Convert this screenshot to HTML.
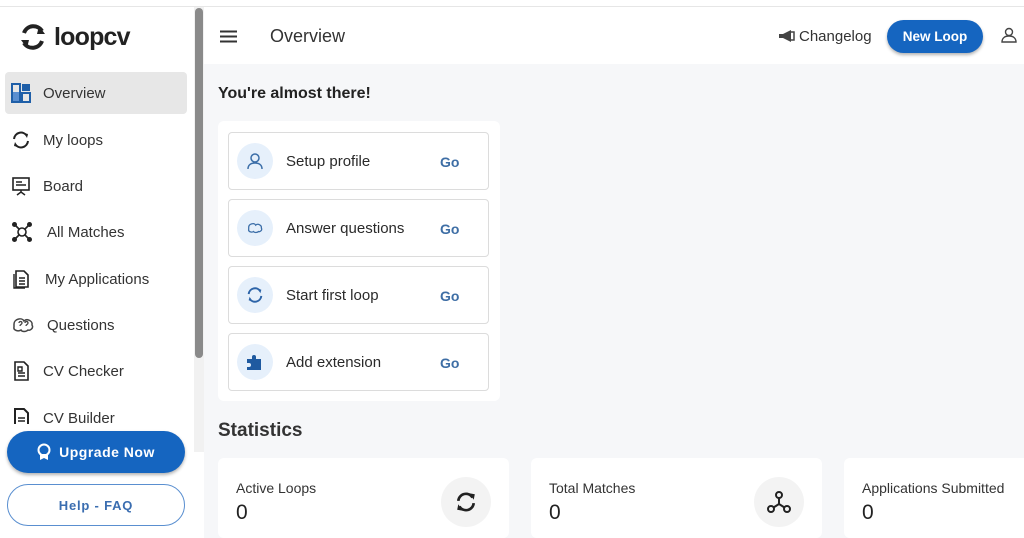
<!DOCTYPE html>
<html><head><meta charset="utf-8"><style>
*{box-sizing:border-box;margin:0;padding:0}
body{width:1024px;height:538px;overflow:hidden;background:#fff;font-family:"Liberation Sans",sans-serif;color:#222;position:relative}
.topline{position:absolute;left:0;top:6px;width:1024px;height:1px;background:#e6e6e6}
.side{position:absolute;left:0;top:7px;width:194px;height:531px;background:#fff}
.track{position:absolute;left:194px;top:7px;width:10px;height:445px;background:#f1f1f1}
.thumb{position:absolute;left:195px;top:8px;width:8px;height:350px;background:#8a8a8a;border-radius:4px}
.logo{position:absolute;left:18px;top:22px;display:flex;align-items:center}
.logo span{font-size:25px;font-weight:bold;color:#222;margin-left:6px;letter-spacing:-0.8px}
.nav{position:absolute;left:5px;width:182px;height:42px;display:flex;align-items:center;font-size:15px;color:#333}
.nav svg{position:absolute;left:6px}
.nav .t{position:absolute;left:38px}
.nav.act{background:#e7e7e7;border-radius:4px}
.up{position:absolute;left:7px;top:431px;width:178px;height:42px;background:#1565c0;border-radius:21px;color:#fff;font-weight:bold;font-size:14px;display:flex;align-items:center;justify-content:center;box-shadow:0 2px 3px rgba(0,0,0,.3);letter-spacing:.5px}
.help{position:absolute;left:7px;top:484px;width:178px;height:42px;border:1px solid #5a8fd0;border-radius:21px;color:#3a6db0;font-weight:bold;font-size:13px;display:flex;align-items:center;justify-content:center;letter-spacing:.8px}
.main{position:absolute;left:204px;top:64px;width:820px;height:474px;background:#f6f7f9}
.hdr{position:absolute;left:204px;top:7px;width:820px;height:57px;background:#fff}
.card{position:absolute;background:#fff;border-radius:6px}
.task{position:absolute;left:228px;width:261px;height:58px;border:1px solid #dcdcdc;border-radius:4px;background:#fff}
.task .ic{position:absolute;left:8px;top:10px;width:36px;height:36px;border-radius:50%;background:#e6f0fb;display:flex;align-items:center;justify-content:center}
.task .l{position:absolute;left:57px;top:20px;font-size:15px;color:#2a2a2a}
.task .g{position:absolute;left:211px;top:21px;font-size:14px;color:#3e6ea5;font-weight:bold}
.stat{position:absolute;top:458px;height:80px;background:#fff;border-radius:6px}
.stat .l{position:absolute;left:18px;top:22px;font-size:14px;color:#333}
.stat .n{position:absolute;left:18px;top:43px;font-size:21px;color:#222}
.stat .c{position:absolute;top:19px;width:50px;height:50px;border-radius:50%;background:#f3f3f3;display:flex;align-items:center;justify-content:center}
</style></head><body>
<div class="topline"></div>
<div class="side"></div>
<div class="main"></div>
<div class="hdr"></div>
<div class="track"></div><div class="thumb"></div>

<div class="logo">
<svg width="30" height="30" viewBox="0 0 30 30"><path d="M6 11 A10 10 0 0 1 24 9" fill="none" stroke="#222" stroke-width="4"/><path d="M21 4 L27 12 L19 12Z" fill="#222"/><path d="M24 19 A10 10 0 0 1 6 21" fill="none" stroke="#222" stroke-width="4"/><path d="M9 26 L3 18 L11 18Z" fill="#222"/></svg>
<span>loopcv</span></div>

<div class="nav act" style="top:72px"><svg width="20" height="20" viewBox="0 0 20 20"><rect x="1" y="1" width="8" height="18" fill="none" stroke="#1f5fa8" stroke-width="2"/><rect x="11" y="1" width="8" height="7" fill="#1f5fa8"/><rect x="11" y="10" width="8" height="9" fill="none" stroke="#1f5fa8" stroke-width="2"/><rect x="2" y="9" width="6" height="9" fill="#5b8fd0"/></svg><span class="t">Overview</span></div>
<div class="nav" style="top:119px"><svg width="20" height="20" viewBox="0 0 20 20"><path d="M3 9A7 7 0 0 1 16 6M17 11A7 7 0 0 1 4 14" fill="none" stroke="#222" stroke-width="2"/><path d="M13 3l4 1-1 4z M7 17l-4-1 1-4z" fill="#222"/></svg><span class="t">My loops</span></div>
<div class="nav" style="top:165px"><svg width="20" height="20" viewBox="0 0 20 20"><rect x="2" y="2" width="16" height="12" fill="none" stroke="#222" stroke-width="1.6"/><path d="M5 6h6M5 9h10M10 14v3M6 19l4-3 4 3" stroke="#222" stroke-width="1.5" fill="none"/></svg><span class="t">Board</span></div>
<div class="nav" style="top:211px"><svg width="22" height="22" viewBox="0 0 22 22"><circle cx="11" cy="11" r="4" fill="none" stroke="#222" stroke-width="1.6"/><path d="M4 4L8 8M18 4L14 8M4 18L8 14M18 18L14 14" stroke="#222" stroke-width="1.6"/><circle cx="3.5" cy="3.5" r="2.5" fill="#222"/><circle cx="18.5" cy="3.5" r="2.5" fill="#222"/><circle cx="3.5" cy="18.5" r="2.5" fill="#222"/><circle cx="18.5" cy="18.5" r="2.5" fill="#222"/></svg><span class="t" style="left:42px">All Matches</span></div>
<div class="nav" style="top:258px"><svg width="20" height="20" viewBox="0 0 20 20"><path d="M5 2h8l4 4v12H5z" fill="none" stroke="#222" stroke-width="1.6"/><path d="M3 5v14h11" fill="none" stroke="#222" stroke-width="1.4"/><path d="M8 9h6M8 12h6M8 15h6" stroke="#222" stroke-width="1.4"/></svg><span class="t" style="left:40px">My Applications</span></div>
<div class="nav" style="top:304px"><svg width="24" height="20" viewBox="0 0 24 20"><path d="M3 9c0-5 8-7 10-3 3-3 9 0 8 4 2 3-2 6-4 5-2 2-6 2-7 0-3 2-8 0-7-3z" fill="none" stroke="#444" stroke-width="1.5"/><path d="M8 8c0-2 3-2 3 0s-2 1-2 3M14 8c0-2 3-2 3 0s-2 1-2 3" fill="none" stroke="#444" stroke-width="1.3"/></svg><span class="t" style="left:42px">Questions</span></div>
<div class="nav" style="top:350px"><svg width="20" height="20" viewBox="0 0 20 20"><path d="M4 1h9l4 4v14H4z" fill="none" stroke="#222" stroke-width="1.6"/><path d="M7 6h4v4H7zM7 12h7M7 15h7" stroke="#222" stroke-width="1.4" fill="none"/></svg><span class="t">CV Checker</span></div>
<div style="position:absolute;left:0;top:408px;width:194px;height:16px;overflow:hidden"><div class="nav" style="top:-11px;left:5px"><svg width="20" height="20" viewBox="0 0 20 20"><path d="M4 1h9l4 4v14H4z" fill="none" stroke="#222" stroke-width="2"/><path d="M7 10h7M7 13h7" stroke="#222" stroke-width="1.6"/></svg><span class="t">CV Builder</span></div></div>

<div class="up"><svg width="14" height="18" viewBox="0 0 14 18" style="margin-right:8px"><circle cx="7" cy="7" r="5.5" fill="none" stroke="#fff" stroke-width="2"/><path d="M3 11v6l4-2 4 2v-6" fill="#fff"/></svg>Upgrade Now</div>
<div class="help">Help - FAQ</div>

<svg style="position:absolute;left:220px;top:30px" width="18" height="13" viewBox="0 0 18 13"><path d="M0 1.5h17M0 6.5h17M0 11.5h17" stroke="#333" stroke-width="2"/></svg>
<div style="position:absolute;left:270px;top:26px;font-size:18px;color:#333">Overview</div>
<svg style="position:absolute;left:778px;top:29px" width="18" height="14" viewBox="0 0 18 14"><path d="M1 5h4l8-4v12l-8-4H1z" fill="#444"/><path d="M13 3h3v8h-3" fill="none" stroke="#444" stroke-width="1.5"/></svg>
<div style="position:absolute;left:799px;top:28px;font-size:15px;color:#333">Changelog</div>
<div style="position:absolute;left:887px;top:20px;width:96px;height:33px;border-radius:17px;background:#1565c0;color:#fff;font-weight:bold;font-size:13.5px;display:flex;align-items:center;justify-content:center;box-shadow:0 2px 3px rgba(0,0,0,.3)">New Loop</div>
<svg style="position:absolute;left:1001px;top:27px" width="16" height="16" viewBox="0 0 16 16"><circle cx="8" cy="5" r="3.5" fill="none" stroke="#444" stroke-width="1.4"/><path d="M1 15c0-4 3-6 7-6s7 2 7 6z" fill="none" stroke="#444" stroke-width="1.4"/></svg>

<div style="position:absolute;left:218px;top:85px;font-size:16px;font-weight:bold;color:#222">You're almost there!</div>
<div class="card" style="left:218px;top:121px;width:282px;height:280px"></div>
<div class="task" style="top:132px"><div class="ic"><svg width="18" height="18" viewBox="0 0 18 18"><circle cx="9" cy="6" r="4" fill="none" stroke="#3b6ea8" stroke-width="1.5"/><path d="M2 17c0-4 3-6 7-6s7 2 7 6" fill="none" stroke="#3b6ea8" stroke-width="1.5"/></svg></div><div class="l">Setup profile</div><div class="g">Go</div></div>
<div class="task" style="top:199px"><div class="ic"><svg width="18" height="14" viewBox="0 0 24 20"><path d="M3 9c0-5 8-7 10-3 3-3 9 0 8 4 2 3-2 6-4 5-2 2-6 2-7 0-3 2-8 0-7-3z" fill="none" stroke="#3b6ea8" stroke-width="1.8"/></svg></div><div class="l">Answer questions</div><div class="g">Go</div></div>
<div class="task" style="top:266px"><div class="ic"><svg width="18" height="18" viewBox="0 0 20 20"><path d="M3 9A7 7 0 0 1 16 6M17 11A7 7 0 0 1 4 14" fill="none" stroke="#2d64a8" stroke-width="2.2"/><path d="M13 3l4 1-1 4z M7 17l-4-1 1-4z" fill="#2d64a8"/></svg></div><div class="l">Start first loop</div><div class="g">Go</div></div>
<div class="task" style="top:333px"><div class="ic"><svg width="18" height="18" viewBox="0 0 18 18"><path d="M1 6h5V4a2 2 0 0 1 4 0v2h5v11H1v-3h2a2 2 0 0 0 0-4H1z" fill="#1f5aa0"/></svg></div><div class="l">Add extension</div><div class="g">Go</div></div>

<div style="position:absolute;left:218px;top:420px;font-size:19px;font-weight:bold;color:#333">Statistics</div>
<div class="stat" style="left:218px;width:291px"><div class="l">Active Loops</div><div class="n">0</div><div class="c" style="left:223px"><svg width="22" height="22" viewBox="0 0 20 20"><path d="M3 9A7 7 0 0 1 16 6M17 11A7 7 0 0 1 4 14" fill="none" stroke="#222" stroke-width="2.4"/><path d="M13 2l5 1-1 5z M7 18l-5-1 1-5z" fill="#222"/></svg></div></div>
<div class="stat" style="left:531px;width:291px"><div class="l">Total Matches</div><div class="n">0</div><div class="c" style="left:223px"><svg width="24" height="24" viewBox="0 0 24 24"><circle cx="12" cy="5" r="3" fill="none" stroke="#222" stroke-width="2"/><circle cx="4" cy="19" r="3" fill="none" stroke="#222" stroke-width="2"/><circle cx="20" cy="19" r="3" fill="none" stroke="#222" stroke-width="2"/><path d="M12 8v6M12 14L6.5 17.5M12 14l5.5 3.5" stroke="#222" stroke-width="2" fill="none"/></svg></div></div>
<div class="stat" style="left:844px;width:200px"><div class="l">Applications Submitted</div><div class="n">0</div></div>
</body></html>
